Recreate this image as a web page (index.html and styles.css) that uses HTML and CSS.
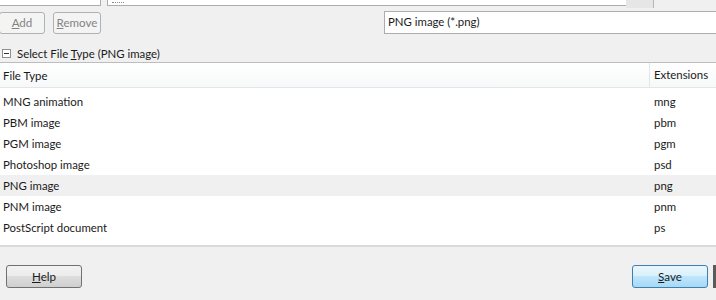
FILE: index.html
```html
<!DOCTYPE html>
<html>
<head>
<meta charset="utf-8">
<link rel="stylesheet" href="styles.css">
</head>
<body>
<div class="dialog">
  <div class="top">
    <div class="topbox left"></div>
    <div class="topbox main"><span class="dots"></span></div>
    <div class="scrollcorner"></div>
  </div>
  <div class="toolbar">
    <div class="btns">
      <button class="btn disabled add"><u>A</u>dd</button>
      <button class="btn disabled remove"><u>R</u>emove</button>
    </div>
    <div class="combo">PNG image (*.png)</div>
  </div>
  <div class="section">
    <span class="expander"><svg width="9" height="9" viewBox="0 0 9 9"><rect x="0.5" y="0.5" width="8" height="8" fill="#fff" stroke="#8e8f8f"/><path d="M2 4.5h5" stroke="#333" stroke-width="1"/></svg></span>
    <span>Select File <u>T</u>ype (PNG image)</span>
  </div>
  <div class="table">
    <div class="thead">
      <div class="col-type">File Type</div>
      <div class="col-ext">Extensions</div>
    </div>
    <div class="tbody">
      <div class="row"><div class="col-type">MNG animation</div><div class="col-ext">mng</div></div>
      <div class="row"><div class="col-type">PBM image</div><div class="col-ext">pbm</div></div>
      <div class="row"><div class="col-type">PGM image</div><div class="col-ext">pgm</div></div>
      <div class="row"><div class="col-type">Photoshop image</div><div class="col-ext">psd</div></div>
      <div class="row selected"><div class="col-type">PNG image</div><div class="col-ext">png</div></div>
      <div class="row"><div class="col-type">PNM image</div><div class="col-ext">pnm</div></div>
      <div class="row"><div class="col-type">PostScript document</div><div class="col-ext">ps</div></div>
    </div>
  </div>
  <div class="footer">
    <button class="btn help"><u>H</u>elp</button>
    <div class="right">
      <button class="btn save"><u>S</u>ave</button>
      <div class="edge"></div>
    </div>
  </div>
</div>
</body>
</html>
```
FILE: styles.css
```css
html, body {
  margin: 0;
  padding: 0;
  width: 716px;
  height: 300px;
  overflow: hidden;
  background: #f0f0f0;
}
body {
  font-family: "Lato", "Noto Sans", sans-serif;
  font-size: 11.4px;
  color: #1a1a1a;
}
.dialog {
  display: flex;
  flex-direction: column;
  height: 300px;
}
.top {
  display: flex;
  height: 6px;
  align-items: flex-start;
}
.topbox {
  background: #fff;
  border: 1px solid #acacac;
  border-top: none;
  box-sizing: border-box;
  height: 6px;
}
.topbox.left {
  width: 101px;
  border-left: none;
}
.topbox.main {
  margin-left: 6px;
  width: 519px;
  border-right: none;
  display: flex;
  padding-left: 4px;
  padding-top: 2px;
}
.dots {
  width: 12px;
  height: 0;
  border-top: 1px dotted #888;
}
.scrollcorner {
  width: 28px;
  height: 8px;
  background: #e6e6e6;
  border-right: 1px solid #b5b5b5;
  box-sizing: border-box;
}
.toolbar {
  display: flex;
  justify-content: space-between;
  align-items: flex-start;
  height: 28px;
}
.btns {
  display: flex;
  gap: 8px;
  padding-top: 6px;
}
.btn {
  font-family: inherit;
  font-size: 11.6px;
  border: 1px solid #707070;
  border-radius: 3px;
  background: linear-gradient(#f2f2f2 0%, #ebebeb 49%, #dddddd 50%, #cfcfcf 100%);
  color: #1a1a1a;
  padding: 0;
  margin: 0;
  height: 22px;
  line-height: 18px;
  box-sizing: border-box;
}
.btn u { text-decoration: underline; }
.btn.disabled {
  background: #f4f4f4;
  border-color: #adb2b5;
  color: #838383;
}
.btn.add {
  width: 46px;
  margin-left: -1px;
}
.btn.remove {
  width: 48px;
}
.combo {
  margin-top: 5px;
  width: 332px;
  height: 23px;
  box-sizing: border-box;
  background: #fff;
  border: 1px solid #abadb3;
  border-right: none;
  padding-left: 3px;
  line-height: 20px;
}
.section {
  display: flex;
  align-items: center;
  gap: 6px;
  padding-left: 2px;
  padding-top: 10px;
  box-sizing: content-box;
  height: 18px;
}
.expander {
  display: flex;
  width: 9px;
  height: 9px;
}
.table {
  background: #fff;
  border-top: 1px solid #bdbdbd;
  border-bottom: 2px solid #dadada;
  height: 185px;
  box-sizing: border-box;
  display: flex;
  flex-direction: column;
}
.thead {
  display: flex;
  height: 24px;
  align-items: center;
  background: linear-gradient(#ffffff, #f7f8f9);
  border-bottom: 1px solid #e5e5e5;
}
.thead .col-ext {
  border-left: 1px solid #e5e5e5;
  height: 24px;
  line-height: 24px;
}
.tbody {
  padding-top: 3px;
}
.row {
  display: flex;
  height: 21px;
  align-items: center;
}
.row.selected {
  background: #f0f0f0;
}
.col-type {
  flex: 1;
  padding-left: 3px;
}
.col-ext {
  width: 62px;
  padding-left: 4px;
}
.footer {
  flex: 1;
  display: flex;
  justify-content: space-between;
  align-items: flex-start;
  padding-top: 18px;
  padding-left: 6px;
}
.btn.help {
  width: 76px;
  height: 23px;
}
.right {
  display: flex;
  gap: 5px;
}
.btn.save {
  width: 76px;
  height: 23px;
  border-color: #3c7fb1;
  background: linear-gradient(#eaf6fd 0%, #d9f0fc 49%, #bee6fd 50%, #a7d9f5 100%);
}
.edge {
  width: 3px;
  height: 23px;
  background: #5a5a5a;
}
```
